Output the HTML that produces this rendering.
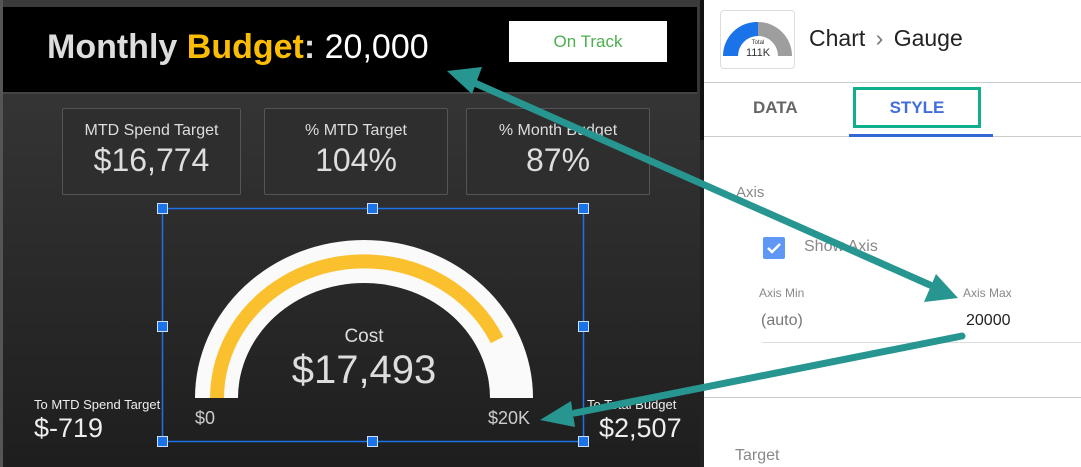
<!DOCTYPE html>
<html><head><style>
body{margin:0;width:1081px;height:467px;overflow:hidden;position:relative;font-family:"Liberation Sans",sans-serif;background:#fff}
.a{position:absolute}
.card{position:absolute;top:108px;height:85px;border:1px solid #555;border-radius:2px;background:#2e2e2e;color:#ddd;text-align:center}
.card .l{font-size:16px;margin-top:13px}
.card .v{font-size:32px;margin-top:2px}
.h{position:absolute;width:9px;height:9px;background:#1a73e8;border:1px solid #cfe0ff}
</style></head><body>
<div class="a" style="left:0;top:0;width:700px;height:467px;background:linear-gradient(#3a3a3a,#1e1e1e)"></div>
<div class="a" style="left:3px;top:7px;width:694px;height:85px;background:#000;border-bottom:2px solid #444"></div>
<div class="a" style="left:0;top:0;width:3px;height:467px;background:#555"></div>
<div class="a" style="left:700px;top:0;width:4px;height:140px;background:#111"></div>
<div class="a" style="left:700px;top:140px;width:4px;height:327px;background:#222"></div>
<div class="a" style="left:47px;top:28px;font-size:34px;color:#ddd;white-space:nowrap"><b>Monthly <span style="color:#fbbc04">Budget</span>:</b> <span style="color:#fff">20,000</span></div>
<div class="a" style="left:509px;top:21px;width:158px;height:41px;background:#fff;color:#4caf50;font-size:17px;text-align:center;line-height:41px">On Track</div>
<div class="card" style="left:62px;width:177px"><div class="l">MTD Spend Target</div><div class="v">$16,774</div></div>
<div class="card" style="left:264px;width:182px"><div class="l">% MTD Target</div><div class="v">104%</div></div>
<div class="card" style="left:466px;width:182px"><div class="l">% Month Budget</div><div class="v">87%</div></div>
<svg class="a" style="left:0;top:0" width="1081" height="467">
<path d="M195 398 A169 158 0 0 1 533 398 L490 398 A126 115 0 0 0 238 398 Z" fill="#fafafa"/>
<path d="M217 398 A147 137 0 0 1 497 340" fill="none" stroke="#fbc02d" stroke-width="14"/>
<rect x="162.5" y="208.5" width="421" height="233" fill="none" stroke="#1a73e8" stroke-width="1.5"/>
</svg>
<div class="h" style="left:157px;top:203px"></div><div class="h" style="left:367px;top:203px"></div><div class="h" style="left:578px;top:203px"></div>
<div class="h" style="left:157px;top:321px"></div><div class="h" style="left:578px;top:321px"></div>
<div class="h" style="left:157px;top:436px"></div><div class="h" style="left:367px;top:436px"></div><div class="h" style="left:578px;top:436px"></div>
<div class="a" style="left:314px;top:326px;width:100px;text-align:center;color:#ddd;font-size:19px">Cost</div>
<div class="a" style="left:264px;top:348px;width:200px;text-align:center;color:#ddd;font-size:40px">$17,493</div>
<div class="a" style="left:195px;top:408px;color:#ccc;font-size:18px">$0</div>
<div class="a" style="left:488px;top:408px;color:#ccc;font-size:18px">$20K</div>
<div class="a" style="left:34px;top:397px;color:#eee;font-size:13px">To MTD Spend Target</div>
<div class="a" style="left:34px;top:413px;color:#eee;font-size:27px">$-719</div>
<div class="a" style="left:587px;top:397px;color:#eee;font-size:13px">To Total Budget</div>
<div class="a" style="left:599px;top:413px;color:#eee;font-size:27px">$2,507</div>
<!-- right panel -->
<div class="a" style="left:720px;top:10px;width:73px;height:57px;border:1px solid #ddd;border-radius:4px;background:#fff"></div>
<svg class="a" style="left:720px;top:10px" width="75" height="60">
<path d="M3 46 A34 34 0 0 1 38 12 L38 26 A20 20 0 0 0 18 46 Z" fill="#1a73e8"/>
<path d="M38 12 A34 34 0 0 1 72 46 L58 46 A20 20 0 0 0 38 26 Z" fill="#9e9e9e"/>
<text x="38" y="34" font-size="6" text-anchor="middle" fill="#333" font-family="Liberation Sans">Total</text>
<text x="38" y="46" font-size="11" text-anchor="middle" fill="#333" font-family="Liberation Sans">111K</text>
</svg>
<div class="a" style="left:809px;top:25px;font-size:23px;color:#222">Chart <span style="color:#777;margin:0 4px">›</span> Gauge</div>
<div class="a" style="left:704px;top:82px;width:377px;height:1px;background:#ccc"></div>
<div class="a" style="left:753px;top:98px;font-size:17px;color:#666;font-weight:bold">DATA</div>
<div class="a" style="left:853px;top:87px;width:122px;height:35px;border:3px solid #0fae8c"></div>
<div class="a" style="left:853px;top:98px;width:128px;text-align:center;font-size:17px;color:#3f6fd8;font-weight:bold">STYLE</div>
<div class="a" style="left:704px;top:136px;width:377px;height:1px;background:#ccc"></div>
<div class="a" style="left:849px;top:134px;width:144px;height:3px;background:#3367d6"></div>
<div class="a" style="left:736px;top:184px;font-size:15px;color:#888">Axis</div>
<div class="a" style="left:763px;top:237px;width:22px;height:22px;background:#5e97f6;border-radius:2px"></div>
<svg class="a" style="left:763px;top:237px" width="22" height="22"><path d="M5 11 L9 15 L17 7" stroke="#fff" stroke-width="2.5" fill="none"/></svg>
<div class="a" style="left:804px;top:238px;font-size:16px;color:#888">Show Axis</div>
<div class="a" style="left:759px;top:286px;font-size:12px;color:#888">Axis Min</div>
<div class="a" style="left:963px;top:286px;font-size:12px;color:#888">Axis Max</div>
<div class="a" style="left:761px;top:312px;font-size:16px;color:#777">(auto)</div>
<div class="a" style="left:966px;top:312px;font-size:16px;color:#222">20000</div>
<div class="a" style="left:762px;top:342px;width:319px;height:1px;background:#ddd"></div>
<div class="a" style="left:704px;top:397px;width:377px;height:1px;background:#ccc"></div>
<div class="a" style="left:735px;top:447px;font-size:16px;color:#888">Target</div>
<svg class="a" style="left:0;top:0" width="1081" height="467">
<g stroke="#279690" stroke-width="7" stroke-linecap="round" fill="none">
<line x1="468" y1="80" x2="930" y2="285"/>
<line x1="962" y1="336" x2="575" y2="413"/>
</g>
<g fill="#279690">
<polygon points="447,71 482,67 472,94"/>
<polygon points="958,298 924,302 936,274"/>
<polygon points="540,420 571,401 575,427"/>
</g>
</svg>
</body></html>
